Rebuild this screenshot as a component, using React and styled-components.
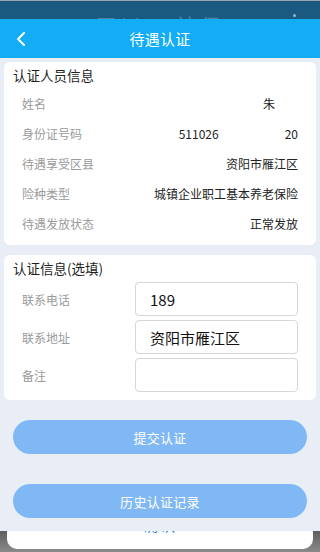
import React from "react";
import styled, { createGlobalStyle } from "styled-components";

const Global = createGlobalStyle`
  html, body { margin: 0; padding: 0; background: #e9eef6; }
  body { font-family: "Noto Sans CJK SC", "Noto Sans", sans-serif; }
  * { box-sizing: border-box; }
`;

const Page = styled.div`
  width: 320px;
  height: 552px;
  display: flex;
  flex-direction: column;
  overflow: hidden;
  background: #e9eef6;
`;

const StatusBar = styled.div`
  height: 19px;
  flex: none;
  background: #1b5a80;
  border-top: 1px solid #9aa6ae;
  display: grid;
  grid-template-columns: 1fr auto 1fr;
  overflow: hidden;
`;

const FadedTitle = styled.div`
  grid-column: 2;
  padding-top: 13px;
  font-size: 20px;
  line-height: 24px;
  letter-spacing: 4px;
  color: rgba(255, 255, 255, 0.25);
  white-space: nowrap;
`;

const Dot = styled.div`
  grid-column: 3;
  justify-self: end;
  margin: 13px 24px 0 0;
  width: 3px;
  height: 3px;
  border-radius: 50%;
  background: rgba(255, 255, 255, 0.55);
`;

const Header = styled.header`
  height: 39px;
  flex: none;
  background: #12adf5;
  display: flex;
  align-items: center;
  justify-content: center;
  position: relative;
`;

const BackButton = styled.div`
  position: absolute;
  left: 15px;
  top: 12px;
  width: 12px;
  height: 16px;
  display: flex;
`;

const HeaderTitle = styled.h1`
  margin: 0;
  font-size: 15px;
  font-weight: 400;
  color: #fff;
  letter-spacing: 0.3px;
`;

const Content = styled.main`
  display: flex;
  flex-direction: column;
  padding: 4px 4px 0;
  gap: 10px;
`;

const Card = styled.section`
  background: #fff;
  border-radius: 6px;
  padding: 0 18px ${(p) => p.$pb || 7}px 9px;
`;

const CardTitle = styled.h2`
  margin: 0;
  height: 26px;
  display: flex;
  align-items: center;
  font-size: 13.5px;
  font-weight: 400;
  color: #1e1e1e;
`;

const InfoRow = styled.div`
  height: 30px;
  display: flex;
  align-items: center;
  justify-content: space-between;
  padding-left: 9px;
  font-size: 12px;
`;

const Label = styled.span`
  color: #9a9a9a;
`;

const Value = styled.span`
  color: #222;
  display: flex;
  align-items: center;
`;

const Mask = styled.span`
  display: inline-block;
  width: ${(p) => p.$w}px;
`;

const Fields = styled.div`
  display: flex;
  flex-direction: column;
  gap: 4px;
  padding-top: 1px;
`;

const FieldRow = styled.div`
  display: grid;
  grid-template-columns: 1fr 163px;
  align-items: center;
  padding-left: 9px;
  font-size: 12px;
`;

const Input = styled.div`
  height: 34px;
  border: 1px solid #d6d6d6;
  border-radius: 4px;
  display: flex;
  align-items: center;
  padding-left: 14px;
  font-size: 15px;
  color: #111;
`;

const Actions = styled.div`
  display: flex;
  flex-direction: column;
  gap: 30px;
  padding: 20px 13px 0;
`;

const Button = styled.button`
  height: 34px;
  border: none;
  border-radius: 17px;
  background: #80b8f5;
  color: #fff;
  font-family: inherit;
  font-size: 13px;
  letter-spacing: 0.3px;
`;

const BottomStrip = styled.div`
  margin-top: 13px;
  flex: 1;
  background: linear-gradient(#5e5e5e, #8a8a8a);
  padding: 0 7px 3px;
  display: flex;
`;

const Sheet = styled.div`
  flex: 1;
  background: #fff;
  border-radius: 0 0 10px 10px;
  overflow: hidden;
  display: flex;
  justify-content: center;
`;

const SheetText = styled.span`
  margin-top: -15px;
  font-size: 15px;
  line-height: 18px;
  color: #2a7be6;
  letter-spacing: 2px;
`;

export default function App() {
  const info = [
    ["姓名", <>朱<Mask $w={23} /></>],
    ["身份证号码", <>511026<Mask $w={66} />20</>],
    ["待遇享受区县", "资阳市雁江区"],
    ["险种类型", "城镇企业职工基本养老保险"],
    ["待遇发放状态", "正常发放"],
  ];
  return (
    <>
      <Global />
      <Page>
        <StatusBar>
          <FadedTitle>四川 e 社保</FadedTitle>
          <Dot />
        </StatusBar>
        <Header>
          <BackButton>
            <svg width="12" height="16" viewBox="0 0 12 16">
              <path d="M9 2 L3 8 L9 14" fill="none" stroke="#fff" strokeWidth="2" strokeLinecap="round" strokeLinejoin="round" />
            </svg>
          </BackButton>
          <HeaderTitle>待遇认证</HeaderTitle>
        </Header>
        <Content>
          <Card>
            <CardTitle>认证人员信息</CardTitle>
            {info.map(([l, v]) => (
              <InfoRow key={l}>
                <Label>{l}</Label>
                <Value>{v}</Value>
              </InfoRow>
            ))}
          </Card>
          <Card $pb={8}>
            <CardTitle>认证信息(选填)</CardTitle>
            <Fields>
              <FieldRow>
                <Label>联系电话</Label>
                <Input>189</Input>
              </FieldRow>
              <FieldRow>
                <Label>联系地址</Label>
                <Input>资阳市雁江区</Input>
              </FieldRow>
              <FieldRow>
                <Label>备注</Label>
                <Input />
              </FieldRow>
            </Fields>
          </Card>
        </Content>
        <Actions>
          <Button>提交认证</Button>
          <Button>历史认证记录</Button>
        </Actions>
        <BottomStrip>
          <Sheet>
            <SheetText>确认</SheetText>
          </Sheet>
        </BottomStrip>
      </Page>
    </>
  );
}
